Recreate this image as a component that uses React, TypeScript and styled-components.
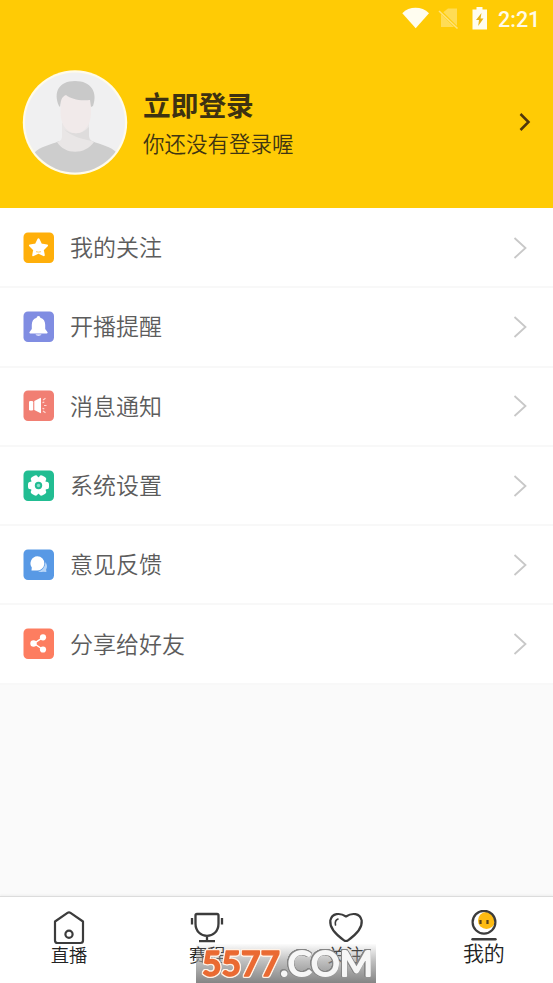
import React from 'react';
import styled, { createGlobalStyle } from 'styled-components';

const Global = createGlobalStyle`
  * { box-sizing: border-box; }
  html, body { margin: 0; padding: 0; background: #fafafa; }
  body { font-family: "Noto Sans CJK SC", "Noto Sans", sans-serif; }
  svg { display: block; flex: none; }
`;

const Screen = styled.div`
  width: 553px;
  height: 983px;
  display: flex;
  flex-direction: column;
  background: #fafafa;
  overflow: hidden;
`;

const Header = styled.header`
  height: 208px;
  flex: none;
  background: #ffcb05;
  display: flex;
  flex-direction: column;
`;

const StatusBar = styled.div`
  height: 38px;
  display: flex;
  align-items: center;
  justify-content: flex-end;
  padding-right: 13px;
`;

const Clock = styled.span`
  font: 500 21.5px/38px Roboto, sans-serif;
  color: #fffbe8;
  width: 42px;
  white-space: nowrap;
  margin: 2px 0 0 10px;
`;

const Profile = styled.div`
  display: flex;
  align-items: center;
  height: 106px;
  margin-top: 31px;
  padding: 0 22px;
`;

const ProfileText = styled.div`
  flex: 1;
  margin: 2px 0 0 15px;
`;

const Name = styled.div`
  font-size: 27.7px;
  line-height: 40px;
  font-weight: 700;
  color: #3d3211;
`;

const Hint = styled.div`
  font-size: 21.5px;
  line-height: 38px;
  font-weight: 350;
  color: #3f3512;
`;

const Menu = styled.main`
  flex: none;
  padding-top: 1px;
  background: #fff;
`;

const Row = styled.div`
  height: 79.3px;
  display: flex;
  align-items: center;
  padding: 0 25px 0 23px;
  background: #fff;
  border-bottom: 2px solid #f8f8f8;
`;

const Label = styled.span`
  flex: 1;
  margin: -3px 0 0 15px;
  font-size: 23px;
  line-height: 34px;
  font-weight: 350;
  color: #5c5c5c;
`;

const TabBar = styled.nav`
  height: 87px;
  flex: none;
  margin-top: auto;
  display: grid;
  grid-template-columns: repeat(4, 1fr);
  background: #fff;
  border-top: 1px solid #dcdcdc;
  box-shadow: 0 -1px 2px #eee;
`;

const Tab = styled.div<{ $active?: boolean }>`
  display: flex;
  flex-direction: column;
  align-items: center;
  padding-top: 13px;
  font-size: ${p => (p.$active ? '21px' : '18.3px')};
  font-weight: 350;
  line-height: 22px;
  color: #222;
`;

const TabText = styled.span`
  margin-top: -3px;
`;

const Watermark = styled.div`
  position: absolute;
  left: 196px;
  top: 944px;
  width: 180px;
  height: 39px;
  background: linear-gradient(rgba(190,190,190,0.05), rgba(155,155,155,0.65) 45%, #858585);
`;

const Chevron = ({ bold }: { bold?: boolean }) =>
  bold ? (
    <svg width="14" height="20" viewBox="0 0 14 20" fill="none">
      <path d="M3.500 2 11.500 10 3.500 18" stroke="#50370c" strokeWidth="2.500" />
    </svg>
  ) : (
    <svg width="15" height="24" viewBox="0 0 15 24" fill="none">
      <path d="M1.500 2 12.500 12 1.500 22" stroke="#c8c8c8" strokeWidth="1.800" />
    </svg>
  );

const Avatar = () => (
  <svg width="106" height="106" viewBox="0 0 106 106">
    <defs>
      <clipPath id="face"><circle cx="53" cy="53.500" r="50" /></clipPath>
    </defs>
    <circle cx="53" cy="53.500" r="52.200" fill="#fffbe9" />
    <g clipPath="url(#face)">
      <rect width="106" height="106" fill="#f0f0f1" />
      <path d="M12 84C18 77 29 76 37 72 43 83 62 83 70 72 79 76 89 77 95 84V106H12Z" fill="#cdcdcd" />
      <path d="M40 54V67C40 71 38 72 35 73 43 86 63 86 72 73 68 71 67 70 67 67V54Z" fill="#e9e6e6" />
      <path d="M42 60C49 66 60 66 67 58V67C67 69 68 71 70 72 60 70 48 67 42 60Z" fill="#dedcdc" />
      <path d="M38.500 27V43C38.500 54 43 60 47 62 51 65 57 65 61 62 65 59 69 54 69 43V27C61 19 46 19 38.500 27Z" fill="#f1eaea" />
      <path d="M37 37C31 23 37 12 53 12 69 12 76 23 71 37L69 38 68 31C57 32 49 30 44 26 39 28 39 32 38 38Z" fill="#c9c9c9" />
    </g>
  </svg>
);

type Kind = 'star' | 'bell' | 'speaker' | 'gear' | 'chat' | 'share';

const glyphs: Record<Kind, React.ReactNode> = {
  star: (
    <>
      <path d="m15.500 7.300 2.700 5.300 5.800.9-4.200 4.200 1 5.500-5.300-2.500-5.300 2.500 1-5.500L7 13.500l5.800-.9Z" fill="#fff" stroke="#fff" strokeWidth="2" strokeLinejoin="round" />
      <path d="M13 19.700q2.500.8 5 0" stroke="#ffcf65" fill="none" />
    </>
  ),
  bell: (
    <>
      <path d="M15.500 5c1 0 1.800.8 1.800 1.700 3.400.9 4.900 3.700 4.900 7v4.200l2.200 3.200c.5.800.2 1.400-.7 1.400H7.300c-.9 0-1.200-.6-.7-1.400l2.200-3.200v-4.200c0-3.300 1.500-6.100 4.900-7 0-.9.800-1.700 1.800-1.700Z" fill="#fff" />
      <path d="M12.500 23.300h6c-1 2.300-5 2.300-6 0Z" fill="#dfe2fb" />
    </>
  ),
  speaker: (
    <>
      <rect x="6" y="11" width="4.200" height="9.500" rx="1.200" fill="#fff" />
      <path d="M11.300 11 17.200 8Q18 7.500 18 8.500V22.500Q18 23.500 17.200 23L11.300 20Z" fill="#fff" />
      <path d="m20 10 2.500-1.700M21 15.500h2.500M20 21l2.500 1.700M19.500 12.700l1.800-.5M19.500 18.300l1.800.5" stroke="#ffd9d3" strokeWidth="1.200" />
    </>
  ),
  gear: (
    <>
      <g fill="#fff">
        <circle cx="15.500" cy="15.500" r="8.300" />
        {[0, 60, 120, 180, 240, 300].map(a => (
          <rect key={a} x="11.700" y="5" width="7.600" height="6" rx="2.500" transform={`rotate(${a + 30} 15.500 15.500)`} />
        ))}
      </g>
      <circle cx="15.500" cy="15.500" r="3.700" fill="#22bd92" />
      <circle cx="15.500" cy="15.500" r="1.700" fill="#8cddca" />
    </>
  ),
  chat: (
    <>
      <path d="M22.500 13c2.500 4 1.200 6.500.6 7.300l.3 2.700-3.400-.3c-2 .7-4 .3-5-.5 4-.3 7-3.500 7.500-9.200Z" fill="#b9d7f8" />
      <path d="M14.300 7.200a7.200 7.200 0 1 1-1.300 14.300h-4.500l.3-3A7.200 7.200 0 0 1 14.300 7.200Z" fill="#fff" />
    </>
  ),
  share: (
    <>
      <path d="M20 9.300 11 15.500 20 21.500" fill="none" stroke="#fff" strokeWidth="1.500" />
      <circle cx="20" cy="9.300" r="3.100" fill="#fff" />
      <circle cx="10.500" cy="15.500" r="3.200" fill="#fff" />
      <circle cx="20" cy="21.500" r="3.100" fill="#fff" />
    </>
  ),
};

const Badge = ({ kind, color }: { kind: Kind; color: string }) => (
  <svg width="32" height="32" viewBox="0 0 32 32">
    <rect x=".5" y=".5" width="30.500" height="30.500" rx="4.500" fill={color} />
    {glyphs[kind]}
  </svg>
);

const items: { kind: Kind; color: string; label: string }[] = [
  { kind: 'star', color: '#ffaf0a', label: '我的关注' },
  { kind: 'bell', color: '#808de2', label: '开播提醒' },
  { kind: 'speaker', color: '#f17f73', label: '消息通知' },
  { kind: 'gear', color: '#22bd92', label: '系统设置' },
  { kind: 'chat', color: '#5899e5', label: '意见反馈' },
  { kind: 'share', color: '#fd7d60', label: '分享给好友' },
];

const StatusIcons = () => (
  <svg width="86" height="26" viewBox="402 6 86 26">
    <path d="M402.300 13.200C409 5.900 422 5.900 429 13.200L415.700 28.300Z" fill="#fffdf0" />
    <path d="M448 8.500h9v18.500h-16V14Z" fill="#ffdc55" />
    <path d="M438.500 9.500 458 29" stroke="#ffcb05" strokeWidth="3" />
    <path d="M439 11 457.500 28.500" stroke="#ffe27a" strokeWidth="1.600" />
    <path d="M476.500 7h6v2.500h4.500v20h-14.500v-20h4Z" fill="#fffdf0" />
    <path d="M481.500 13 476 20h3l-.8 6 5.300-7.500h-3Z" fill="#e8b416" />
  </svg>
);

const HomeIcon = () => (
  <svg width="34" height="36" viewBox="0 0 34 36" fill="none" stroke="#3c3c3c" strokeWidth="2.200" strokeLinejoin="round">
    <path d="M3 11.500 15.500 2.800Q17 1.800 18.500 2.800L31 11.500V30.500q0 2.500-2.500 2.500H5.500Q3 33 3 30.500Z" />
    <circle cx="17" cy="24.200" r="3.600" />
  </svg>
);

const TrophyIcon = () => (
  <svg width="34" height="36" viewBox="0 0 34 36" fill="none" stroke="#3c3c3c" strokeWidth="2.300">
    <path d="M7 4h20q1.500 0 1.500 1.500v8C28.500 30 5.500 30 5.500 13.500V5.500Q5.500 4 7 4ZM17 26v5.500M9 31.200h16M2 8v6.500M32 8v6.500" />
  </svg>
);

const HeartIcon = () => (
  <svg width="36" height="36" viewBox="0 0 36 36" fill="none" stroke="#3c3c3c" strokeWidth="2.200" strokeLinecap="round" strokeLinejoin="round">
    <path d="M18 6.500C12 2.500 4 3 2.300 10.500 1.500 18 7 24 16 30.300Q18 31.700 20 30.300C29 24 34.500 18 33.700 10.500 32 3 24 2.500 18 6.500Z" />
    <path d="M7.500 15Q6.500 10.500 10 9" strokeWidth="1.600" />
  </svg>
);

const MineIcon = () => (
  <svg width="30" height="34" viewBox="0 0 30 34">
    <circle cx="17.500" cy="10.500" r="8.500" fill="#fdbb12" />
    <circle cx="15" cy="12.200" r="11.400" fill="none" stroke="#3c3c3c" strokeWidth="2.200" />
    <path d="M11.500 10v4M18.500 10v4" stroke="#574018" strokeWidth="2.200" />
    <path d="M3.500 29.300h23" stroke="#3c3c3c" strokeWidth="2.400" strokeLinecap="round" />
  </svg>
);

const Digits = styled.text`
  font: 700 34px Lato, sans-serif;
  fill: #ea6a32;
  stroke: #ea6a32;
  stroke-width: 1.4px;
  filter: drop-shadow(0 -1px 0 #fff2e6) drop-shadow(0 1px 0 #fff2e6) drop-shadow(1px 0 0 #fff2e6) drop-shadow(-1px 0 0 #fff2e6);
`;

const Domain = styled.text`
  font: 400 35px Lato, sans-serif;
  fill: #f6f6f6;
  stroke: #f6f6f6;
  stroke-width: 2px;
  filter: drop-shadow(0 -0.7px 0 #858585) drop-shadow(0 0.7px 0 #858585) drop-shadow(0.7px 0 0 #858585) drop-shadow(-0.7px 0 0 #858585);
`;

const MarkText = () => (
  <svg width="180" height="39" viewBox="0 0 180 39" strokeLinejoin="round">
    <Digits x="6" y="32" textLength="78" lengthAdjust="spacingAndGlyphs">5577</Digits>
    <Domain x="84" y="32" textLength="93" lengthAdjust="spacingAndGlyphs">.COM</Domain>
  </svg>
);

export default function App() {
  return (
    <Screen>
      <Global />
      <Header>
        <StatusBar>
          <StatusIcons />
          <Clock>2:21</Clock>
        </StatusBar>
        <Profile>
          <Avatar />
          <ProfileText>
            <Name>立即登录</Name>
            <Hint>你还没有登录喔</Hint>
          </ProfileText>
          <Chevron bold />
        </Profile>
      </Header>
      <Menu>
        {items.map(item => (
          <Row key={item.kind}>
            <Badge kind={item.kind} color={item.color} />
            <Label>{item.label}</Label>
            <Chevron />
          </Row>
        ))}
      </Menu>
      <TabBar>
        <Tab><HomeIcon /><TabText>直播</TabText></Tab>
        <Tab><TrophyIcon /><TabText>赛程</TabText></Tab>
        <Tab><HeartIcon /><TabText>关注</TabText></Tab>
        <Tab $active><MineIcon /><TabText>我的</TabText></Tab>
      </TabBar>
      <Watermark><MarkText /></Watermark>
    </Screen>
  );
}
